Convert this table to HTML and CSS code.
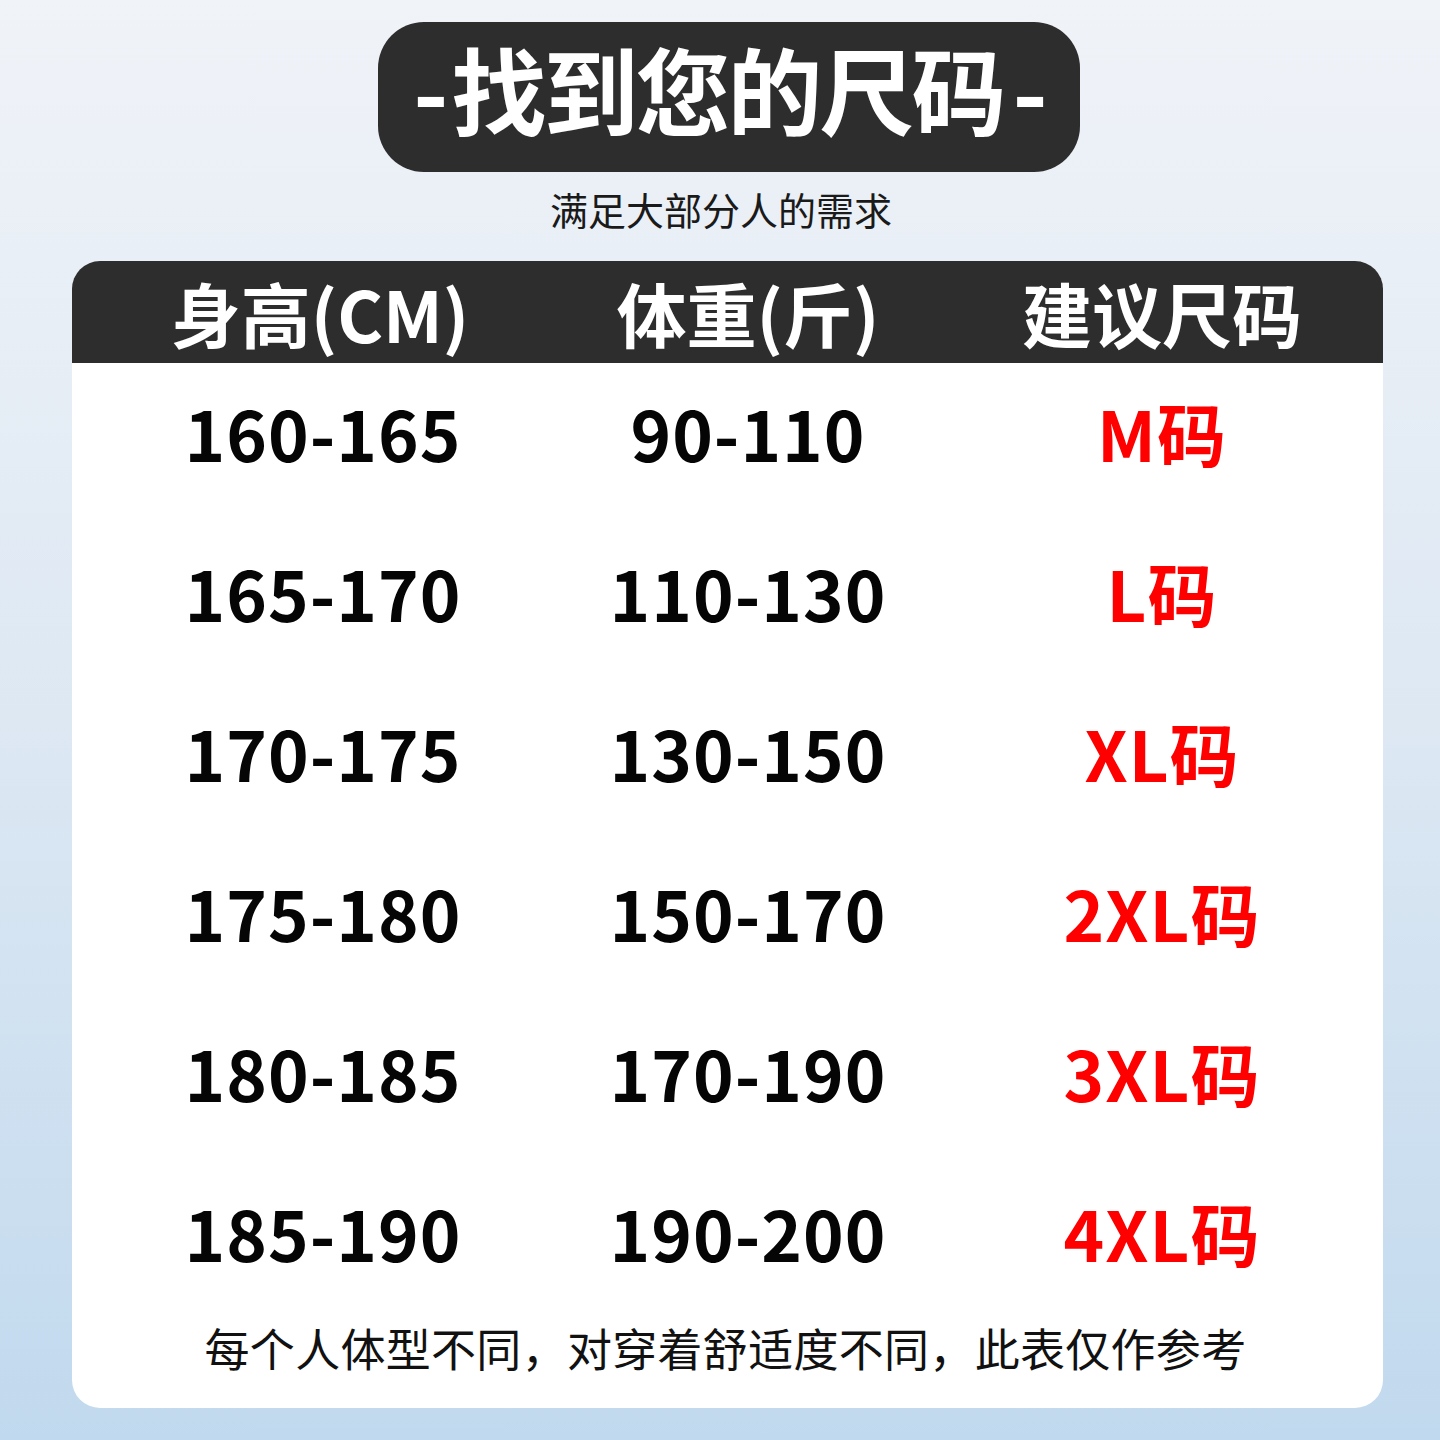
FILE: index.html
```html
<!DOCTYPE html>
<html lang="zh-CN">
<head>
<meta charset="utf-8">
<title>找到您的尺码</title>
<link rel="stylesheet" href="styles.css">
</head>
<body>
<div class="page">
  <div class="pill"><span class="dash-l">-</span>找到您的尺码<span class="dash-r">-</span></div>
  <div class="subtitle">满足大部分人的需求</div>
  <div class="card">
    <div class="row head">
      <div class="c1">身高(CM)</div>
      <div class="c2">体重(斤)</div>
      <div class="c3">建议尺码</div>
    </div>
    <div class="row data"><div class="c1">160-165</div><div class="c2">90-110</div><div class="c3 red">M码</div></div>
    <div class="row data"><div class="c1">165-170</div><div class="c2">110-130</div><div class="c3 red">L码</div></div>
    <div class="row data"><div class="c1">170-175</div><div class="c2">130-150</div><div class="c3 red">XL码</div></div>
    <div class="row data"><div class="c1">175-180</div><div class="c2">150-170</div><div class="c3 red">2XL码</div></div>
    <div class="row data"><div class="c1">180-185</div><div class="c2">170-190</div><div class="c3 red">3XL码</div></div>
    <div class="row data"><div class="c1">185-190</div><div class="c2">190-200</div><div class="c3 red">4XL码</div></div>
    <div class="note">每个人体型不同，对穿着舒适度不同，此表仅作参考</div>
  </div>
</div>
</body>
</html>
```
FILE: styles.css
```css
html, body {
  margin: 0;
  padding: 0;
}
body {
  width: 1440px;
  height: 1440px;
  overflow: hidden;
  background: linear-gradient(180deg, #f0f3f8 0%, #dde8f3 50%, #c1d9ee 100%);
  font-family: "Noto Sans CJK SC", "Noto Sans", sans-serif;
}
.page {
  display: flex;
  flex-direction: column;
  padding-top: 22px;
}
.pill {
  width: 702px;
  height: 150px;
  margin-left: 378px;
  box-sizing: border-box;
  padding-bottom: 19px;
  border-radius: 46px;
  background: #2d2d2d;
  color: #ffffff;
  font-weight: 700;
  font-size: 95px;
  letter-spacing: -3px;
  display: flex;
  align-items: center;
  justify-content: center;
  line-height: 1.3;
}
.dash-l {
  margin-right: 6px;
}
.dash-r {
  margin-left: 9px;
}
.subtitle {
  margin-top: 12px;
  height: 50px;
  line-height: 50px;
  text-align: center;
  font-size: 38px;
  color: #1a1a1a;
  padding-left: 2px;
}
.card {
  margin-top: 27px;
  margin-left: 72px;
  width: 1311px;
  height: 1147px;
  border-radius: 28px;
  overflow: hidden;
  background: #ffffff;
  display: flex;
  flex-direction: column;
}
.row {
  display: grid;
  grid-template-columns: 496px 360px 1fr;
  align-items: center;
  text-align: center;
  font-weight: 700;
  line-height: 1.3;
}
.row .c3 {
  padding-left: 13px;
}
.head {
  height: 102px;
  flex-shrink: 0;
  background: #2d2d2d;
  color: #ffffff;
  font-size: 70px;
  line-height: normal;
}
.data {
  height: 160px;
  box-sizing: border-box;
  padding-bottom: 20px;
  color: #050505;
  font-size: 69px;
  letter-spacing: 1px;
}
.data .c1 {
  padding-left: 6px;
}
.red {
  color: #ff0000;
}
.note {
  height: 85px;
  box-sizing: border-box;
  padding-bottom: 35px;
  line-height: 50px;
  text-align: center;
  font-size: 45px;
  letter-spacing: 0.3px;
  color: #111111;
  padding-right: 4px;
}
```
